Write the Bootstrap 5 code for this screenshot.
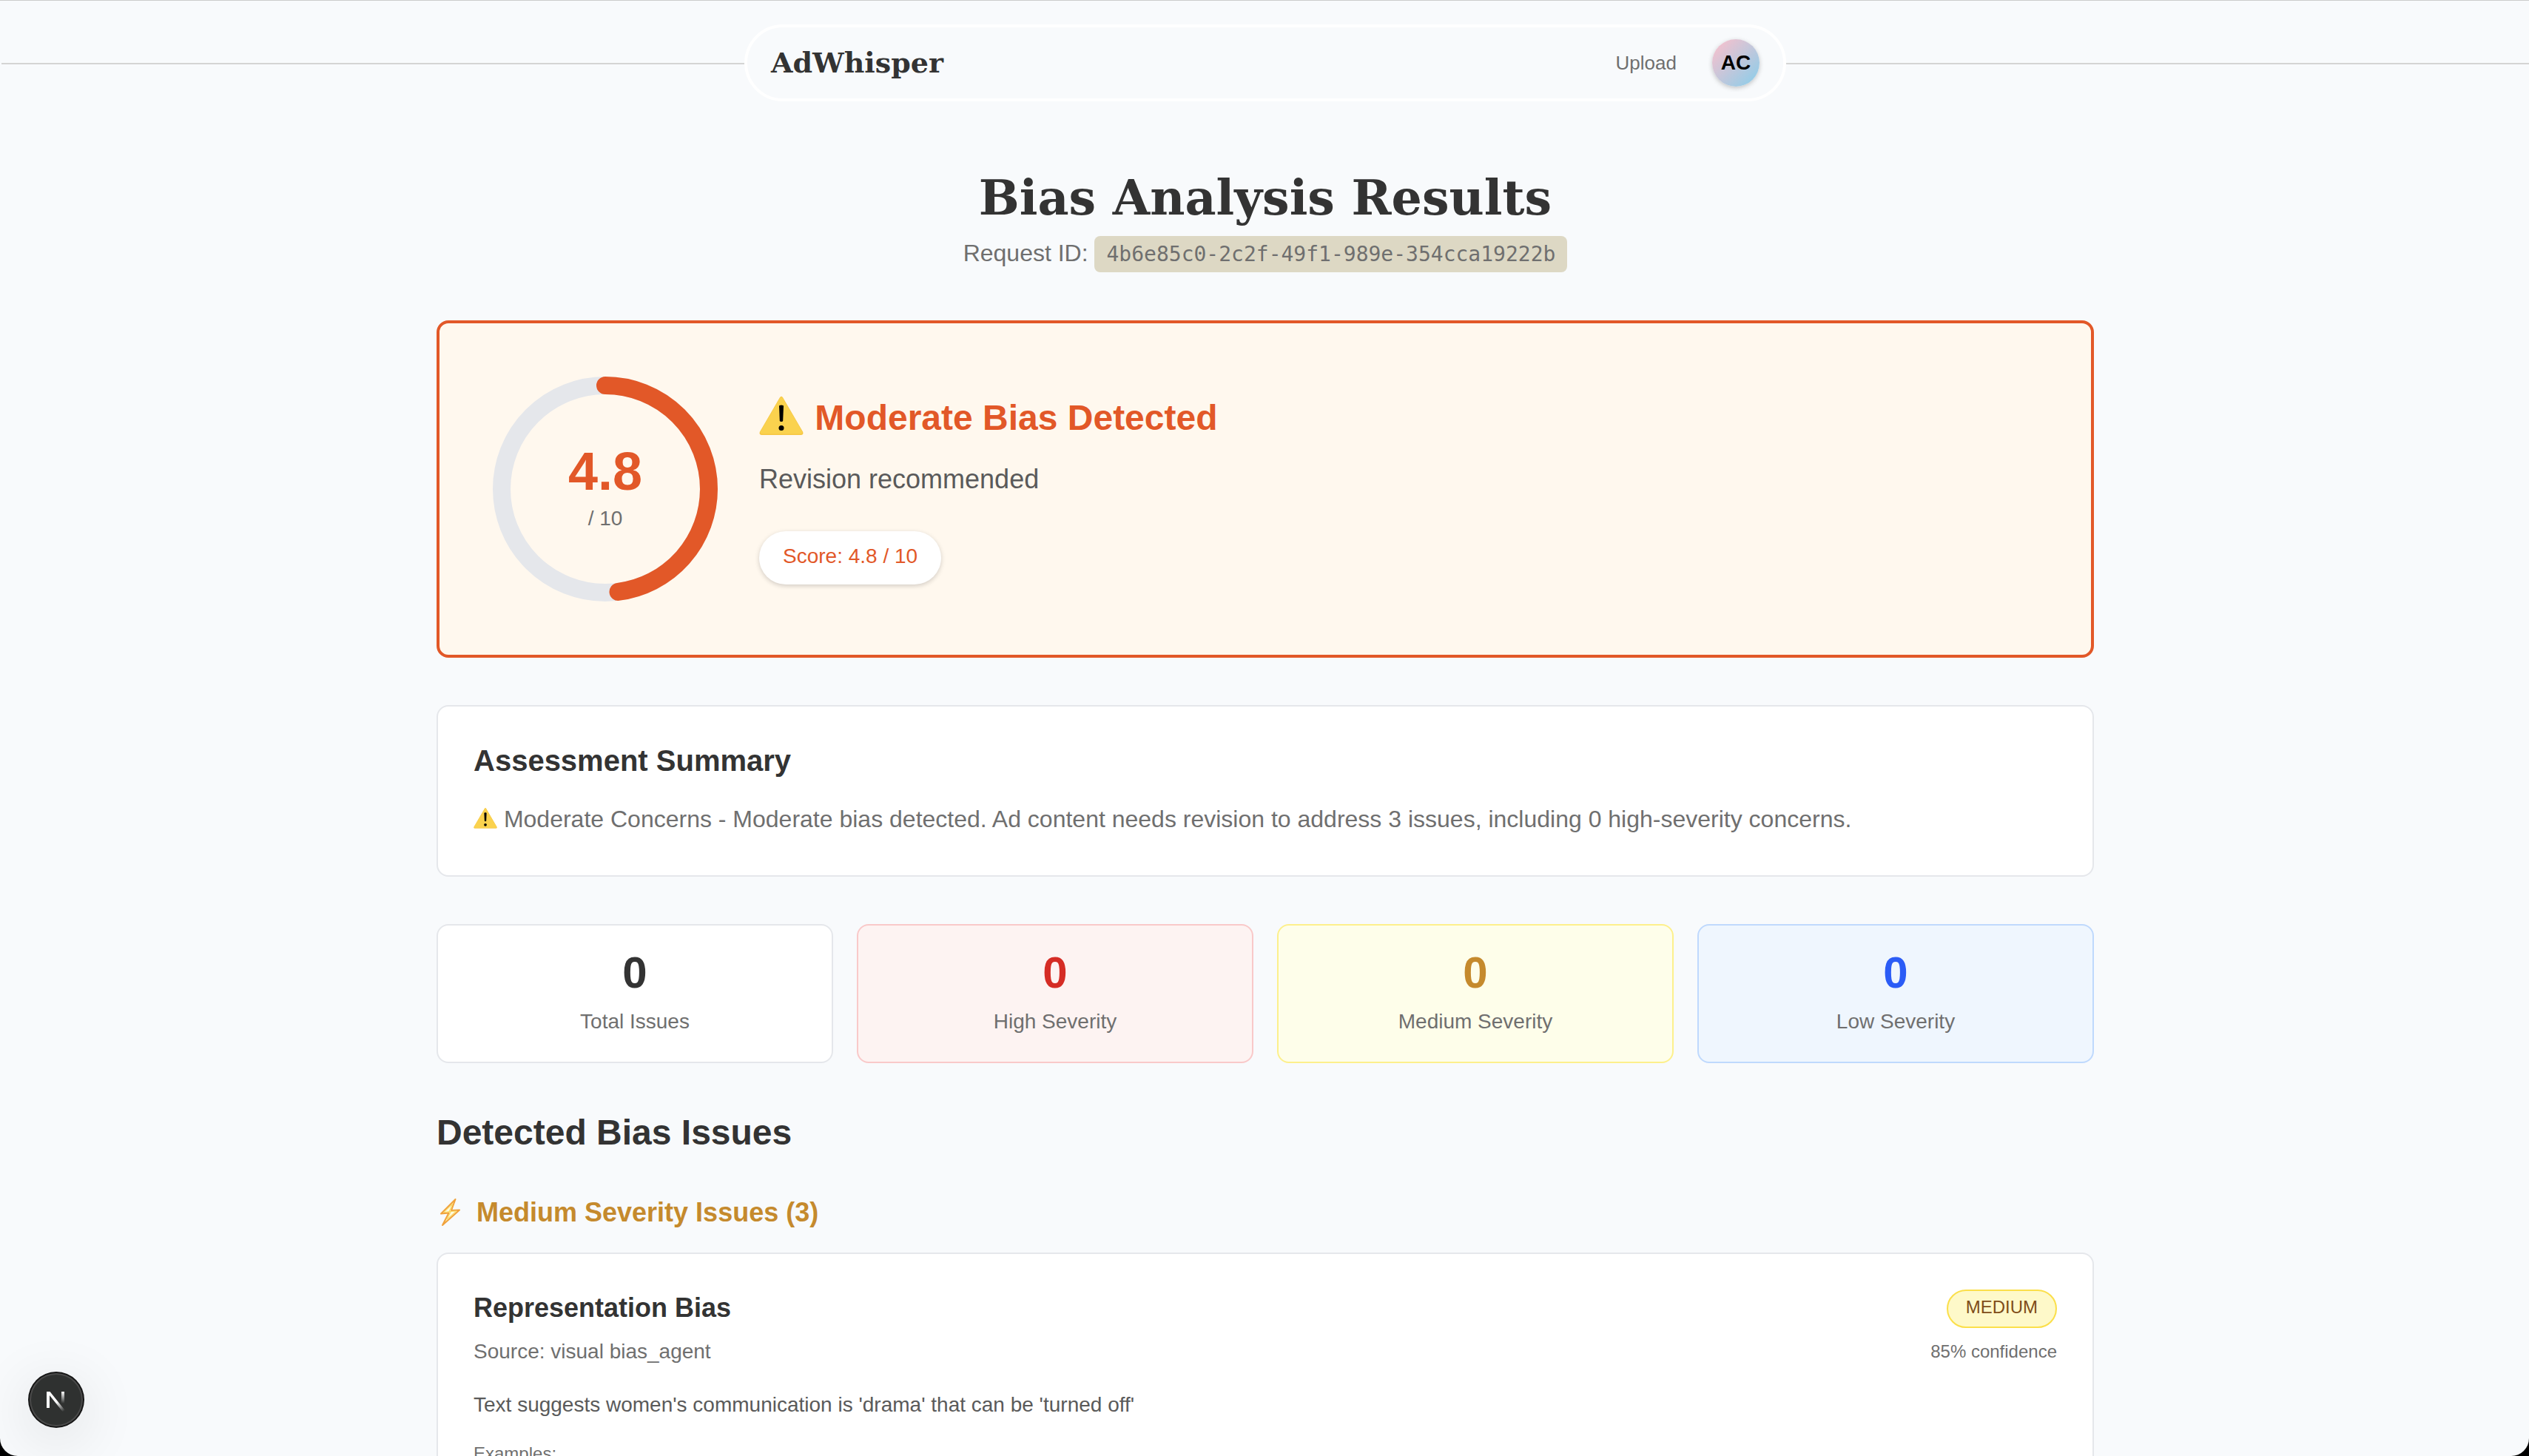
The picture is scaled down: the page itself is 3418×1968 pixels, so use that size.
<!DOCTYPE html>
<html lang="en">
<head>
<meta charset="utf-8">
<meta name="viewport" content="width=device-width, initial-scale=1">
<title>AdWhisper – Bias Analysis Results</title>
<link href="https://cdn.jsdelivr.net/npm/bootstrap@5.3.0/dist/css/bootstrap.min.css" rel="stylesheet">
<style>
  html { background: #000; }
  body { height: 100vh; overflow: hidden; background: #f8fafc; color: #333; padding-left: 2px; border-top: 1px solid #ccc; border-radius: 0 0 24px 24px; font-family: "Liberation Sans", Arial, sans-serif; font-size: 28px; line-height: 40px; }
  .font-display { font-family: "DejaVu Serif", Georgia, serif; font-weight: 700; color: #333; }
  .text-soft { color: #6f6f6f; }
  .site-header { padding-top: 32px; }
  .rule { height: 2px; background: #d4d4d4; margin-top: 2px; }
  .nav-pill { width: 1408px; max-width: 100%; height: 104px; border: 4px solid #fff; border-radius: 52px; padding: 0 32px; }
  .brand { font-size: 38px; line-height: 56px; }
  .nav-upload { font-size: 26px; line-height: 36px; margin-right: 48px; }
  .avatar { width: 64px; height: 64px; border: 0; border-radius: 50%; padding: 0; background: linear-gradient(135deg, #ffc0cb, #87ceeb); color: #000; font-size: 28px; line-height: 60px; box-shadow: 0 2px 6px rgba(0,0,0,.22); }
  .page { width: 2240px; max-width: 100%; }
  .page-title { font-size: 65px; line-height: 80px; margin: 90px 0 10px; }
  .request { font-size: 32px; line-height: 50px; margin: 0 0 64px; }
  .request code { background: #ddd8c4; color: #6f6f6f; font: 28px/50px "DejaVu Sans Mono", monospace; padding: 8px 16px; border-radius: 8px; }
  .panel { background: #fff; border: 2px solid #e5e7eb; border-radius: 16px; }
  .score-panel { background: #fff8ee; border: 4px solid #e25828; padding: 64px; gap: 48px; margin-bottom: 64px; }
  .gauge { width: 320px; height: 320px; }
  .gauge-text { inset: 0; }
  .accent { color: #e25828; }
  .gauge-num { font-size: 72px; line-height: 72px; font-weight: 700; }
  .gauge-max { margin-top: 8px; }
  .verdict { font-size: 48px; line-height: 64px; font-weight: 700; margin: 0 0 22px; }
  .emoji { width: 60px; height: 60px; vertical-align: -0.22em; margin-right: 2px; }
  .emoji-sm { width: 32px; height: 32px; vertical-align: -0.12em; margin-right: 0; }
  .advice { font-size: 36px; line-height: 56px; color: #5a5a5a; margin: 0 0 42px; }
  .score-chip { background: #fff; border-radius: 36px; padding: 14px 32px 18px; box-shadow: 0 2px 6px rgba(0,0,0,.18); }
  .summary { padding: 48px; margin-bottom: 64px; }
  .summary h2 { font-size: 40px; line-height: 50px; font-weight: 700; margin: 0 0 28px; }
  .summary p { font-size: 32px; line-height: 52px; margin: 0 0 2px; }
  .stats { gap: 32px; margin-bottom: 66px; }
  .stat { flex: 1 1 0; text-align: center; padding: 32px 32px 34px; }
  .stat strong { display: block; font-size: 60px; line-height: 64px; margin-bottom: 14px; }
  .stat-high { background: #fdf3f2; border-color: #f9c9c9; } .stat-high strong { color: #d52c25; }
  .stat-med { background: #fefeea; border-color: #fdf08c; } .stat-med strong { color: #c58a2d; }
  .stat-low { background: #eff6fe; border-color: #bfd9fd; } .stat-low strong { color: #2b5cf6; }
  .issues-title { font-size: 48px; line-height: 56px; font-weight: 700; margin: 0 0 52px; }
  .group-title { font-size: 36px; line-height: 56px; font-weight: 700; color: #c58a2d; gap: 14px; margin: 0 0 26px; }
  .issue { padding: 48px; }
  .issue h4 { font-size: 36px; line-height: 50px; font-weight: 700; margin: 0 0 14px; }
  .severity { background: #fef9c9; border: 2px solid #fbdf4a; border-radius: 26px; color: #7f4d18; padding: 6px 24px 10px; margin-bottom: 16px; }
  .fs-24 { font-size: 24px; line-height: 32px; }
  .finding { color: #5a5a5a; margin: 32px 0 30px; }
  .dev-button { position: fixed; left: 38px; bottom: 38px; width: 76px; height: 76px; border: 0; border-radius: 50%; padding: 0; background: none; box-shadow: 0 16px 80px rgba(0,0,0,.12); }
</style>
</head>
<body>
<svg class="d-none" aria-hidden="true">
  <defs>
    <symbol id="warn" viewBox="0 0 60 60">
      <path d="M27.800 5.500Q30 2 32.200 5.500L59 51.500Q60.500 55.500 56.500 56H3.500Q-.5 55.500 1 51.500Z" fill="#f6c744"/>
      <path d="M28.200 6Q30 3.500 31.800 6L58 51Q59 54 56 54.500H4Q1 54 2 51Z" fill="#fad24e"/>
      <path d="M27 17Q27 15.500 30 15.500T33 17L32.200 36.500Q32 38 30 38T27.800 36.500Z" fill="#000"/><circle cx="30" cy="46.500" r="3.500" fill="#000"/>
    </symbol>
  </defs>
</svg>
<header class="site-header d-flex align-items-center">
  <div class="rule flex-fill"></div>
  <nav class="nav-pill d-flex align-items-center" aria-label="Main">
    <a class="brand font-display text-decoration-none me-auto" href="#">AdWhisper</a>
    <a class="nav-upload text-soft text-decoration-none" href="#">Upload</a>
    <button class="avatar fw-bold" type="button">AC</button>
  </nav>
  <div class="rule flex-fill"></div>
</header>
<main class="page mx-auto">
  <h1 class="page-title font-display text-center">Bias Analysis Results</h1>
  <p class="request text-soft text-center">Request ID: <code>4b6e85c0-2c2f-49f1-989e-354cca19222b</code></p>

  <section class="panel score-panel d-flex align-items-center">
    <div class="gauge position-relative">
      <svg width="320" height="320" viewBox="0 0 320 320" fill="none" stroke-width="24" aria-hidden="true">
        <circle cx="160" cy="160" r="140" stroke="#e5e7eb"/>
        <circle cx="160" cy="160" r="140" stroke="#e25828" stroke-linecap="round" pathLength="100" stroke-dasharray="48 100" transform="rotate(-90 160 160)"/>
      </svg>
      <div class="gauge-text position-absolute d-flex flex-column align-items-center justify-content-center">
        <span class="gauge-num accent">4.8</span>
        <span class="gauge-max text-soft">/ 10</span>
      </div>
    </div>
    <div>
      <h2 class="verdict accent"><svg class="emoji" aria-hidden="true"><use href="#warn"/></svg> Moderate Bias Detected</h2>
      <p class="advice">Revision recommended</p>
      <span class="score-chip accent d-inline-block align-top">Score: 4.8 / 10</span>
    </div>
  </section>

  <section class="panel summary">
    <h2>Assessment Summary</h2>
    <p class="text-soft"><svg class="emoji emoji-sm" aria-hidden="true"><use href="#warn"/></svg> Moderate Concerns - Moderate bias detected. Ad content needs revision to address 3 issues, including 0 high-severity concerns.</p>
  </section>

  <section class="stats d-flex">
    <div class="panel stat"><strong>0</strong><span class="text-soft">Total Issues</span></div>
    <div class="panel stat stat-high"><strong>0</strong><span class="text-soft">High Severity</span></div>
    <div class="panel stat stat-med"><strong>0</strong><span class="text-soft">Medium Severity</span></div>
    <div class="panel stat stat-low"><strong>0</strong><span class="text-soft">Low Severity</span></div>
  </section>

  <h2 class="issues-title">Detected Bias Issues</h2>
  <h3 class="group-title d-flex align-items-center">
    <svg width="40" height="44" viewBox="0 0 40 44" aria-hidden="true"><path d="M25.500 4L6 23.500L16.500 22.500L8 39L31 18.500L20 19Z" fill="#fff0a8" stroke="#f0a23c" stroke-width="2" stroke-linejoin="round"/><path d="M21.500 10.500L10 21.500L19.500 20.500L14 31L26.500 20L17 20.500Z" fill="#fffbe0" stroke="#fad65a" stroke-width="1"/></svg>
    Medium Severity Issues (3)
  </h3>
  <article class="panel issue">
    <div class="d-flex justify-content-between align-items-start">
      <div>
        <h4>Representation Bias</h4>
        <div class="text-soft">Source: visual bias_agent</div>
      </div>
      <div class="d-flex flex-column align-items-end fs-24">
        <span class="severity">MEDIUM</span>
        <span class="text-soft">85% confidence</span>
      </div>
    </div>
    <p class="finding">Text suggests women's communication is 'drama' that can be 'turned off'</p>
    <div class="fs-24 text-soft">Examples:</div>
  </article>
</main>
<button class="dev-button" type="button" aria-label="Open developer tools">
  <svg class="d-block" width="76" height="76" viewBox="0 0 76 76" fill="none" aria-hidden="true">
    <defs>
      <linearGradient id="nDiag" x1="40" y1="40" x2="49" y2="53" gradientUnits="userSpaceOnUse"><stop stop-color="#fff"/><stop offset="1" stop-color="#fff" stop-opacity="0"/></linearGradient>
      <linearGradient id="nStem" x1="0" y1="27" x2="0" y2="43" gradientUnits="userSpaceOnUse"><stop stop-color="#fff"/><stop offset="1" stop-color="#fff" stop-opacity="0"/></linearGradient>
    </defs>
    <circle cx="38" cy="38" r="38" fill="#151515"/><circle cx="38" cy="38" r="36" fill="#4a4a4a"/><circle cx="38" cy="38" r="34" fill="#2f3130"/>
    <path d="M25 49V27H29.500L50 52.500L47 54.500L29 32V49Z" fill="url(#nDiag)"/>
    <path d="M45 27H49V43H45Z" fill="url(#nStem)"/>
  </svg>
</button>
<script src="https://cdn.jsdelivr.net/npm/bootstrap@5.3.0/dist/js/bootstrap.bundle.min.js"></script>
</body>
</html>
